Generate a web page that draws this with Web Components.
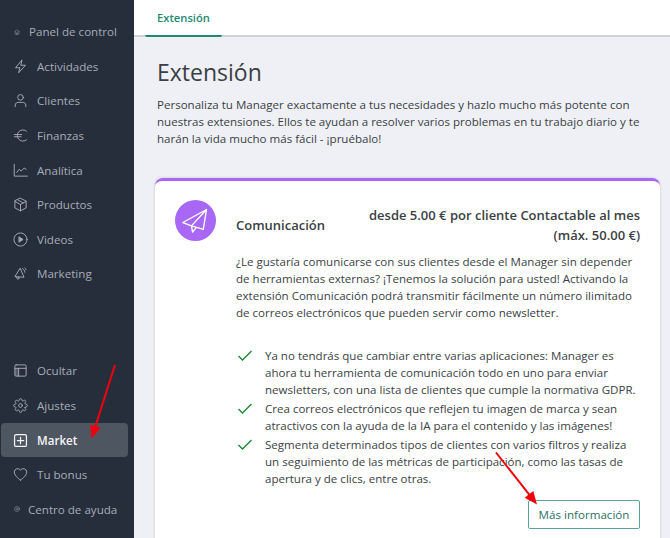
<!DOCTYPE html>
<html lang="es">
<head>
<meta charset="utf-8">
<title>Extensión</title>
<style>
  html, body { margin: 0; height: 100%; overflow: hidden; }
  body { font-family: "Open Sans", "Noto Sans", sans-serif; background: #eef0f5; }
</style>
</head>
<body>

<app-shell>
  <side-bar slot="side">
    <nav-item size="small" icon="home">Panel de control</nav-item>
    <nav-item icon="bolt">Actividades</nav-item>
    <nav-item icon="user">Clientes</nav-item>
    <nav-item icon="euro">Finanzas</nav-item>
    <nav-item icon="chart">Analítica</nav-item>
    <nav-item icon="box">Productos</nav-item>
    <nav-item icon="play">Videos</nav-item>
    <nav-item icon="megaphone">Marketing</nav-item>
    <nav-item slot="bottom" icon="panel">Ocultar</nav-item>
    <nav-item slot="bottom" icon="gear">Ajustes</nav-item>
    <nav-item slot="bottom" icon="plus" active>Market</nav-item>
    <nav-item slot="bottom" icon="heart">Tu bonus</nav-item>
    <nav-item slot="bottom" size="small" icon="help">Centro de ayuda</nav-item>
  </side-bar>

  <tab-bar slot="tabs" label="Extensión"></tab-bar>

  <page-intro title="Extensión">
    Personaliza tu Manager exactamente a tus necesidades y hazlo mucho más potente con nuestras extensiones. Ellos te ayudan a resolver varios problemas en tu trabajo diario y te harán la vida mucho más fácil - ¡pruébalo!
  </page-intro>

  <extension-card name="Comunicación" price="desde 5.00 € por cliente Contactable al mes (máx. 50.00 €)" action="Más información">
    <p slot="description">¿Le gustaría comunicarse con sus clientes desde el Manager sin depender de herramientas externas? ¡Tenemos la solución para usted! Activando la extensión Comunicación podrá transmitir fácilmente un número ilimitado de correos electrónicos que pueden servir como newsletter.</p>
    <check-item>Ya no tendrás que cambiar entre varias aplicaciones: Manager es ahora tu herramienta de comunicación todo en uno para enviar newsletters, con una lista de clientes que cumple la normativa GDPR.</check-item>
    <check-item>Crea correos electrónicos que reflejen tu imagen de marca y sean atractivos con la ayuda de la IA para el contenido y las imágenes!</check-item>
    <check-item>Segmenta determinados tipos de clientes con varios filtros y realiza un seguimiento de las métricas de participación, como las tasas de apertura y de clics, entre otras.</check-item>
  </extension-card>

  <red-arrow x1="115" y1="365" x2="91.5" y2="438.5"></red-arrow>
  <red-arrow x1="496" y1="452.5" x2="537" y2="504.5"></red-arrow>
</app-shell>

<script>
// icon strokes, all drawn on a 24x24 box
const ICONS = {
  home: '<path d="M3 11l9-8 9 8"/><path d="M5 9v12h14V9"/><path d="M10 21v-6h4v6"/>',
  bolt: '<path d="M14 2L4 14h7l-2 8 11-12h-7z"/>',
  user: '<circle cx="12" cy="7" r="4.500"/><path d="M3.500 22v-2.500c0-3 2.500-4.500 5-4.500h7c2.500 0 5 1.500 5 4.500V22"/>',
  euro: '<path d="M21.500 5A9 9 0 1 0 21.500 19"/><path d="M2 10.500h12M2 14h11"/>',
  chart: '<path d="M2 2v19h21"/><path d="M6 15l4-5 3 3 5-5 3 2"/>',
  box: '<path d="M12 2l9 4.500v11L12 22l-9-4.500v-11z"/><path d="M3 7l9 5 9-5M12 12v10M7.500 4.500l9 5"/>',
  play: '<circle cx="12" cy="12" r="10.500"/><path d="M10 8l6 4-6 4z" fill="currentColor"/>',
  megaphone: '<path d="M11 4L3 17l14 1z"/><path d="M6 18l1 3 3-1-1-2"/><path d="M15 4c2 1 4 3 4 6"/><path d="M19 3c1 1 2 2 2 3"/>',
  panel: '<path d="M3 8.500h6V21H3z" fill="currentColor" fill-opacity=".35" stroke="none"/><rect x="3" y="3" width="18" height="18" rx="2"/><path d="M3 8.500h18M9 8.500V21"/>',
  gear: '<circle cx="12" cy="12" r="3"/><path d="M19.400 15a1.650 1.650 0 0 0 .33 1.820l.06.06a2 2 0 0 1 0 2.830 2 2 0 0 1-2.830 0l-.06-.06a1.650 1.650 0 0 0-1.820-.33 1.650 1.650 0 0 0-1 1.510V21a2 2 0 0 1-2 2 2 2 0 0 1-2-2v-.09A1.650 1.650 0 0 0 9 19.400a1.650 1.650 0 0 0-1.820.33l-.06.06a2 2 0 0 1-2.830 0 2 2 0 0 1 0-2.830l.06-.06a1.650 1.650 0 0 0 .33-1.820 1.650 1.650 0 0 0-1.510-1H3a2 2 0 0 1-2-2 2 2 0 0 1 2-2h.09A1.650 1.650 0 0 0 4.600 9a1.650 1.650 0 0 0-.33-1.820l-.06-.06a2 2 0 0 1 0-2.830 2 2 0 0 1 2.830 0l.06.06a1.650 1.650 0 0 0 1.820.33H9a1.650 1.650 0 0 0 1-1.510V3a2 2 0 0 1 2-2 2 2 0 0 1 2 2v.09a1.650 1.650 0 0 0 1 1.510 1.650 1.650 0 0 0 1.820-.33l.06-.06a2 2 0 0 1 2.830 0 2 2 0 0 1 0 2.830l-.06.06a1.650 1.650 0 0 0-.33 1.820V9a1.650 1.650 0 0 0 1.510 1H21a2 2 0 0 1 2 2 2 2 0 0 1-2 2h-.09a1.650 1.650 0 0 0-1.510 1z"/>',
  plus: '<rect x="2.500" y="2.500" width="19" height="19" rx="2.500"/><path d="M12 7v10M7 12h10"/>',
  heart: '<path d="M12 21S2 14.500 2 8a5.500 5.500 0 0 1 10-3 5.500 5.500 0 0 1 10 3c0 6.500-10 13-10 13z"/>',
  help: '<circle cx="12" cy="12" r="10"/><circle cx="12" cy="12" r="4"/>'
};

class AppShell extends HTMLElement {
  constructor() {
    super();
    this.attachShadow({ mode: "open" });
    this.shadowRoot.innerHTML = `
      <style>
        :host { display: flex; position: relative; height: 538px; overflow: hidden; }
        main { flex: 1; min-width: 0; display: flex; flex-direction: column; }
        .content { padding: 0 10px 0 21px; display: flex; flex-direction: column; }
      </style>
      <slot name="side"></slot>
      <main>
        <slot name="tabs"></slot>
        <div class="content"><slot></slot></div>
      </main>
    `;
  }
}

class SideBar extends HTMLElement {
  constructor() {
    super();
    this.attachShadow({ mode: "open" });
    this.shadowRoot.innerHTML = `
      <style>
        :host {
          display: flex; flex-direction: column; justify-content: space-between;
          width: 134px; flex: none; box-sizing: border-box; height: 538px;
          padding: 14.500px 0 11.500px; background: #272e3b;
        }
        div { display: flex; flex-direction: column; }
      </style>
      <div><slot></slot></div>
      <div><slot name="bottom"></slot></div>
    `;
  }
}

class NavItem extends HTMLElement {
  connectedCallback() {
    if (this.shadowRoot) return;
    const icon = ICONS[this.getAttribute("icon")] || "";
    this.attachShadow({ mode: "open" });
    this.shadowRoot.innerHTML = `
      <style>
        :host {
          display: flex; align-items: center; height: 34.6px; box-sizing: border-box;
          margin-left: 1px; width: 127px; padding-left: 12px; border-radius: 4px;
          font-size: 11.600px; color: #a5acb8; white-space: nowrap;
        }
        svg {
          width: 15px; height: 15px; flex: none; margin-right: 9px; fill: none;
          stroke: currentColor; stroke-width: 1.500; stroke-linecap: round; stroke-linejoin: round;
        }
        :host([active]) { background: #4e5661; color: #f4f5f7; font-weight: 600; }
        :host([active]) svg { stroke-width: 2; }
        :host([size="small"]) svg { width: 6px; height: 6px; margin: 0 9px 0 1px; stroke-width: 2.200; opacity: .8; }
        :host([icon="help"]) svg { margin-right: 8px; }
      </style>
      <svg viewBox="0 0 24 24">${icon}</svg>
      <slot></slot>
    `;
  }
}

class TabBar extends HTMLElement {
  connectedCallback() {
    if (this.shadowRoot) return;
    this.attachShadow({ mode: "open" });
    this.shadowRoot.innerHTML = `
      <style>
        :host {
          display: flex; height: 37px; box-sizing: border-box; padding-left: 11px;
          background: #fff; border-bottom: 2px solid #cfd2d6;
        }
        span {
          display: block; height: 37px; box-sizing: border-box; padding: 10px 12px 0;
          font-size: 11.200px; font-weight: 600; color: #1f8a74;
          border-bottom: 2px solid #1f8a74; border-radius: 0 0 2px 2px;
        }
      </style>
      <span>${this.getAttribute("label")}</span>
    `;
  }
}

class PageIntro extends HTMLElement {
  connectedCallback() {
    if (this.shadowRoot) return;
    this.attachShadow({ mode: "open" });
    this.shadowRoot.innerHTML = `
      <style>
        :host { display: block; color: #3a3f45; margin-left: 2px; }
        h1 { margin: 19px 0 0; font-size: 23px; font-weight: 400; line-height: 33px; }
        p { margin: 7px 0 0; font-size: 11.550px; line-height: 17px; width: 490px; }
      </style>
      <h1>${this.getAttribute("title")}</h1>
      <p><slot></slot></p>
    `;
  }
}

class ExtensionCard extends HTMLElement {
  connectedCallback() {
    if (this.shadowRoot) return;
    this.attachShadow({ mode: "open" });
    this.shadowRoot.innerHTML = `
      <style>
        :host {
          display: block; box-sizing: border-box; margin-top: 31px; width: 505px; height: 400px;
          padding: 19px 20px 0; background: #fff; border-top: 3px solid #a868f5;
          border-radius: 8px 8px 0 0; color: #3a3f45;
          box-shadow: 0 0 3px rgba(0,0,0,.18);
        }
        header { display: flex; align-items: flex-start; height: 41px; }
        .logo {
          width: 41px; height: 41px; flex: none; border-radius: 50%; background: #a868f5;
          display: flex; align-items: center; justify-content: center;
        }
        .logo svg { width: 27px; height: 27px; fill: none; stroke: #fff; stroke-width: 1.200; stroke-linejoin: round; }
        h2 { margin: 16px 0 0 20px; font-size: 13px; line-height: 18px; font-weight: 600; white-space: nowrap; flex: none; }
        .price {
          flex: 1; margin: 6px 0 0 30px; text-align: right; font-size: 13px;
          font-weight: 600; line-height: 19.500px;
        }
        .body { margin: 12px 0 0 61px; font-size: 11.550px; line-height: 17px; }
        ::slotted(p) { margin: 0; }
        .list { margin-top: 26px; display: flex; flex-direction: column; gap: 2px; }
        footer { display: flex; justify-content: flex-end; margin-top: 13px; }
        button {
          width: 112px; height: 29px; padding: 0; background: #fff; border: 1px solid #5ba396;
          border-radius: 2px; font: 400 11.600px "Open Sans", sans-serif; color: #2e6f67;
        }
      </style>
      <header>
        <div class="logo">
          <svg viewBox="0 0 24 24">
            <path d="M21.800 2.200L.8 13.800l7.600 3zM21.800 2.200L8.400 16.800l10.500 3zM8.400 16.800l1 5.500 3-3.800"/>
          </svg>
        </div>
        <h2>${this.getAttribute("name")}</h2>
        <div class="price">${this.getAttribute("price")}</div>
      </header>
      <div class="body">
        <slot name="description"></slot>
        <div class="list"><slot></slot></div>
        <footer><button>${this.getAttribute("action")}</button></footer>
      </div>
    `;
  }
}

class CheckItem extends HTMLElement {
  constructor() {
    super();
    this.attachShadow({ mode: "open" });
    this.shadowRoot.innerHTML = `
      <style>
        :host { display: flex; }
        svg { width: 14px; height: 11px; flex: none; margin: 3px 13px 0 2px; fill: none; stroke: #1a8a35; stroke-width: 1.400; }
        div { flex: 1; min-width: 0; }
      </style>
      <svg viewBox="0 0 14 11"><path d="M.5 6l4 4L13.500 1"/></svg>
      <div><slot></slot></div>
    `;
  }
}

// overlay annotation arrow, coordinates are page pixels
class RedArrow extends HTMLElement {
  connectedCallback() {
    if (this.shadowRoot) return;
    const [x1, y1, x2, y2] = ["x1", "y1", "x2", "y2"].map((a) => +this.getAttribute(a));
    const ang = Math.atan2(y2 - y1, x2 - x1);
    const head = (d, off) => {
      return `${x2 - 13 * Math.cos(ang) + off * Math.cos(ang + d)},${y2 - 13 * Math.sin(ang) + off * Math.sin(ang + d)}`;
    };
    this.attachShadow({ mode: "open" });
    this.shadowRoot.innerHTML = `
      <style>
        :host { position: absolute; inset: 0; pointer-events: none; }
        svg { width: 670px; height: 538px; display: block; }
      </style>
      <svg viewBox="0 0 670 538">
        <line x1="${x1}" y1="${y1}" x2="${x2 - 8 * Math.cos(ang)}" y2="${y2 - 8 * Math.sin(ang)}" stroke="#f0000e" stroke-width="2"/>
        <polygon fill="#f0000e" points="${x2},${y2} ${head(Math.PI / 2, 5.500)} ${head(-Math.PI / 2, 5.500)}"/>
      </svg>
    `;
  }
}

customElements.define("app-shell", AppShell);
customElements.define("side-bar", SideBar);
customElements.define("nav-item", NavItem);
customElements.define("tab-bar", TabBar);
customElements.define("page-intro", PageIntro);
customElements.define("extension-card", ExtensionCard);
customElements.define("check-item", CheckItem);
customElements.define("red-arrow", RedArrow);
</script>
</body>
</html>
